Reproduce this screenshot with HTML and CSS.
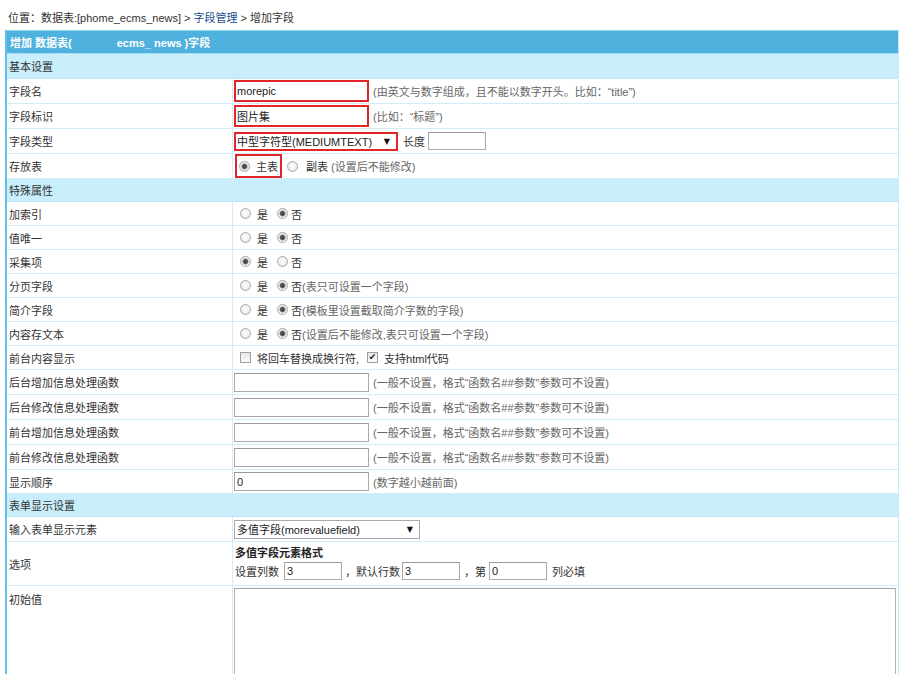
FILE: index.html
```html
<!DOCTYPE html>
<html lang="zh-CN">
<head>
<meta charset="utf-8">
<title>增加字段</title>
<link rel="stylesheet" href="styles.css">
</head>
<body>
<div class="crumb">位置：数据表:[phome_ecms_news] &gt; <a class="link" href="#">字段管理</a> &gt; 增加字段</div>
<div class="form">
  <div class="head">增加 数据表(<span class="tbl">ecms_ news )字段</span></div>
  <div class="section h25">基本设置</div>

  <div class="row h25"><div class="lab">字段名</div><div class="val"><input class="inp w135 red" value="morepic"><span class="hint">(由英文与数字组成，且不能以数字开头。比如：“title”)</span></div></div>
  <div class="row h25"><div class="lab">字段标识</div><div class="val"><input class="inp w135 red" value="图片集"><span class="hint">(比如：“标题”)</span></div></div>
  <div class="row h25"><div class="lab">字段类型</div><div class="val"><div class="sel red-sel w164"><span>中型字符型(MEDIUMTEXT)</span><span class="arr">▼</span></div><span class="txt ml5">长度</span><input class="inp w58 lenbox" value=""></div></div>
  <div class="row h25"><div class="lab">存放表</div><div class="val"><span class="redbox"><span class="rd on"></span><span class="opt">主表</span></span><span class="rd ml5"></span><span class="opt2">副表</span><span class="hint ml3">(设置后不能修改)</span></div></div>

  <div class="section h23">特殊属性</div>
  <div class="row h24"><div class="lab">加索引</div><div class="val"><span class="rd first"></span><span class="opt">是</span><span class="rd second on"></span><span class="opt3">否</span></div></div>
  <div class="row h24"><div class="lab">值唯一</div><div class="val"><span class="rd first"></span><span class="opt">是</span><span class="rd second on"></span><span class="opt3">否</span></div></div>
  <div class="row h24"><div class="lab">采集项</div><div class="val"><span class="rd first on"></span><span class="opt">是</span><span class="rd second"></span><span class="opt3">否</span></div></div>
  <div class="row h24"><div class="lab">分页字段</div><div class="val"><span class="rd first"></span><span class="opt">是</span><span class="rd second on"></span><span class="opt3">否<span class="hint">(表只可设置一个字段)</span></span></div></div>
  <div class="row h24"><div class="lab">简介字段</div><div class="val"><span class="rd first"></span><span class="opt">是</span><span class="rd second on"></span><span class="opt3">否<span class="hint">(模板里设置截取简介字数的字段)</span></span></div></div>
  <div class="row h24"><div class="lab">内容存文本</div><div class="val"><span class="rd first"></span><span class="opt">是</span><span class="rd second on"></span><span class="opt3">否<span class="hint">(设置后不能修改,表只可设置一个字段)</span></span></div></div>
  <div class="row h24"><div class="lab">前台内容显示</div><div class="val"><span class="cb first"></span><span class="opt">将回车替换成换行符,</span><span class="cb on cb2">✔</span><span class="opt">支持html代码</span></div></div>
  <div class="row h25"><div class="lab">后台增加信息处理函数</div><div class="val"><input class="inp w135" value=""><span class="hint">(一般不设置，格式“函数名##参数”参数可不设置)</span></div></div>
  <div class="row h25"><div class="lab">后台修改信息处理函数</div><div class="val"><input class="inp w135" value=""><span class="hint">(一般不设置，格式“函数名##参数”参数可不设置)</span></div></div>
  <div class="row h25"><div class="lab">前台增加信息处理函数</div><div class="val"><input class="inp w135" value=""><span class="hint">(一般不设置，格式“函数名##参数”参数可不设置)</span></div></div>
  <div class="row h25"><div class="lab">前台修改信息处理函数</div><div class="val"><input class="inp w135" value=""><span class="hint">(一般不设置，格式“函数名##参数”参数可不设置)</span></div></div>
  <div class="row h24"><div class="lab">显示顺序</div><div class="val"><input class="inp w135" value="0"><span class="hint">(数字越小越前面)</span></div></div>

  <div class="section h23">表单显示设置</div>
  <div class="row h25"><div class="lab">输入表单显示元素</div><div class="val"><div class="sel w186"><span>多值字段(morevaluefield)</span><span class="arr">▼</span></div></div></div>
  <div class="row h44"><div class="lab">选项</div><div class="val col">
    <div class="bold">多值字段元素格式</div>
    <div class="line2"><span class="txt">设置列数</span><input class="inp w58 small ml5" value="3"><span class="txt ml3">，默认行数</span><input class="inp w58 small ml2" value="3"><span class="txt ml4">，第</span><input class="inp w58 small ml3" value="0"><span class="txt ml5">列必填</span></div>
  </div></div>
  <div class="row hbig"><div class="lab top">初始值</div><div class="val top"><textarea class="area"></textarea></div></div>
</div>
</body>
</html>
```

FILE: styles.css
```css
* { box-sizing: border-box; }
body {
  margin: 0;
  font: 11px "Liberation Sans", "Noto Sans CJK SC", sans-serif;
  color: #333;
  background: #fff;
  overflow: hidden;
}
.crumb {
  height: 30px;
  padding: 12px 0 0 8px;
  line-height: 12px;
  color: #333;
}
.link { color: #1b4c8f; text-decoration: none; }

.form {
  margin-left: 5px;
  width: 894px;
  border-top: 1px solid #8fd1ee;
  border-left: 2px solid #62bfe7;
  border-right: 1px solid #c3e8f6;
}
.head {
  height: 23px;
  background: #4fb1dd;
  color: #fff;
  font-weight: bold;
  display: flex;
  align-items: center;
  padding-left: 3px;
  border-bottom: 1px solid #a6dbf1;
}
.tbl { margin-left: 45px; }
.section {
  background: #c8eefb;
  display: flex;
  align-items: center;
  padding-left: 2px;
  border-bottom: 1px solid #bde5f4;
}
.row {
  display: grid;
  grid-template-columns: 226px 1fr;
  border-bottom: 1px solid #d3edf8;
}
.h23 { height: 23px; }
.h24 { height: 24px; }
.h25 { height: 25px; }
.h44 { height: 44px; }
.hbig { height: 140px; }

.lab {
  border-right: 1px solid #d3edf8;
  display: flex;
  align-items: center;
  padding-left: 2px;
}
.val {
  display: flex;
  align-items: center;
  padding-left: 1px;
  white-space: nowrap;
}
.lab.top { align-items: flex-start; padding-top: 5px; }
.val.top { align-items: flex-start; padding-top: 1px; }
.val.col { flex-direction: column; align-items: flex-start; justify-content: flex-start; padding-top: 5px; }

.inp {
  font: inherit;
  color: #222;
  height: 19px;
  border: 1px solid #aaaaaa;
  border-top-color: #9a9a9a;
  padding: 0 2px;
  background: #fff;
  outline: none;
}
.w135 { width: 135px; }
.w58 { width: 58px; }
.red {
  border: 2px solid #e1262b;
  height: 22px;
  padding: 0 1px;
}
.lenbox { height: 18px; margin-left: 3px; }
.small { height: 18px; }

.hint { color: #666; margin-left: 4px; }
.opt3 .hint { margin-left: 0; }
.txt { color: #333; }
.ml2 { margin-left: 2px; }
.ml3 { margin-left: 3px; }
.ml4 { margin-left: 4px; }
.ml5 { margin-left: 5px; }

.sel {
  height: 19px;
  border: 1px solid #a9a9a9;
  display: flex;
  align-items: center;
  justify-content: space-between;
  padding: 0 6px 0 2px;
  color: #222;
  background: #fff;
}
.red-sel { border: 2px solid #e1262b; height: 19px; padding-left: 1px; }
.w164 { width: 164px; }
.w186 { width: 186px; }
.arr {
  font: 8px "DejaVu Sans", sans-serif;
  color: #111;
}

.redbox {
  display: flex;
  align-items: center;
  height: 24px;
  border: 2px solid #e1262b;
  padding: 0 2px;
  margin-left: 1px;
}

.rd {
  flex: none;
  width: 11px;
  height: 11px;
  border-radius: 50%;
  border: 1px solid #a9a9a9;
  background: radial-gradient(circle at 50% 45%, #ffffff 0, #ebebeb 70%, #dedede 100%);
}
.rd.on {
  background: radial-gradient(circle, #4d4d4d 0 2px, #9a9a9a 2.6px, #e8e8e8 3.4px, #f6f6f6 100%);
}
.rd.first { margin-left: 6px; }
.rd.second { margin-left: 9px; }
.opt { margin-left: 6px; color: #333; }
.opt2 { margin-left: 8px; color: #333; }
.opt3 { margin-left: 3px; color: #333; }

.cb {
  flex: none;
  width: 11px;
  height: 11px;
  border: 1px solid #9e9e9e;
  background: linear-gradient(#e6e6e6, #fbfbfb);
  display: flex;
  align-items: center;
  justify-content: center;
  font: 9px/1 "DejaVu Sans", sans-serif;
  color: #222;
}
.cb.first { margin-left: 6px; }
.cb2 { margin-left: 8px; }

.bold { font-weight: bold; color: #222; line-height: 13px; margin-left: 1px; }
.line2 { display: flex; align-items: center; margin-top: 2px; height: 18px; margin-left: 1px; }

.area {
  width: 662px;
  height: 130px;
  margin-top: 1px;
  border: 1px solid #b3b3b3;
  border-top-color: #a0a0a0;
  resize: none;
  font: inherit;
}
```
